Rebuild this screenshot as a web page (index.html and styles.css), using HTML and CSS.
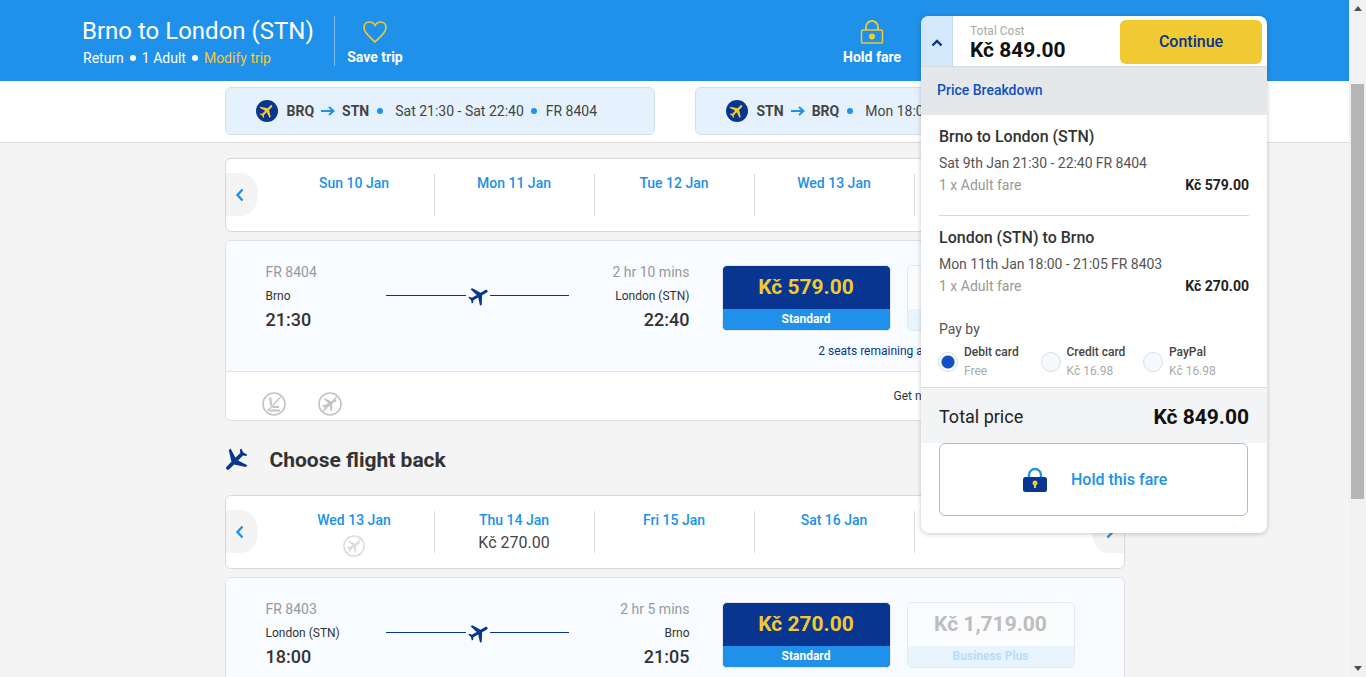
FILE: index.html
```html
<!DOCTYPE html>
<html lang="en">
<head>
    <meta charset="UTF-8">
    <meta name="viewport" content="width=device-width, initial-scale=1.0">
    <title>Brno to London (STN)</title>
    <link rel="stylesheet" href="styles.css">
</head>
<body>
    <svg class="defs" width="0" height="0">
        <symbol id="plane" viewBox="0 0 24 24"><path d="M21 16v-2l-8-5V3.5c0-.83-.67-1.5-1.5-1.5S10 2.67 10 3.5V9l-8 5v2l8-2.5V19l-2 1.5V22l3.5-1 3.5 1v-1.5L13 19v-5.5l8 2.5z"/></symbol>
        <symbol id="no-flight" viewBox="0 0 24 24">
            <circle cx="12" cy="12" r="11" fill="#fff" stroke="currentColor" stroke-width="1.6"/>
            <path fill="currentColor" transform="rotate(60 12 12) translate(3 3) scale(.75)" d="M21 16v-2l-8-5V3.5c0-.83-.67-1.5-1.5-1.5S10 2.67 10 3.5V9l-8 5v2l8-2.5V19l-2 1.5V22l3.5-1 3.5 1v-1.5L13 19v-5.5l8 2.5z"/>
            <path d="M19 4.500 5 19.500" stroke="currentColor" stroke-width="1.200"/>
        </symbol>
        <symbol id="no-seat" viewBox="0 0 24 24">
            <circle cx="12" cy="12" r="11" fill="#fff" stroke="currentColor" stroke-width="1.6"/>
            <path d="M8 5.500l1.500 9.500H17M7 18.500h11" fill="none" stroke="currentColor" stroke-width="2.200"/>
            <path d="M19 4.500 5 19.500" stroke="#fff" stroke-width="2.400"/>
            <path d="M19 4.500 5 19.500" stroke="currentColor" stroke-width="1.200"/>
        </symbol>
    </svg>

    <div class="page">
        <div class="content">
            <header class="top-bar">
                <div class="trip">
                    <h1>Brno to London (STN)</h1>
                    <div class="trip-sub">
                        <span>Return</span><i class="dot"></i><span>1 Adult</span><i class="dot"></i><span class="modify">Modify trip</span>
                    </div>
                </div>
                <div class="save-trip">
                    <svg class="heart" viewBox="0 0 26 24" width="26" height="24"><path d="M13 22C8 17 2 13 2 7.500 2 4 4.500 2 7.500 2 10 2 12 3.500 13 5.500 14 3.500 16 2 18.500 2 21.500 2 24 4 24 7.500 24 13 18 17 13 22z" fill="none" stroke="#f1c933" stroke-width="1.600"/></svg>
                    <span>Save trip</span>
                </div>
                <div class="hold-fare">
                    <svg viewBox="0 0 24 25" width="24" height="25"><path d="M6 11V8a6 6 0 0 1 12 0v3" fill="none" stroke="#f1c933" stroke-width="1.800"/><rect x="1.500" y="11" width="21" height="13" rx="1.500" fill="none" stroke="#f1c933" stroke-width="1.500"/><circle cx="12" cy="17.500" r="3" fill="#f1c933"/></svg>
                    <span>Hold fare</span>
                </div>
            </header>

            <div class="journeys">
                <div class="journey">
                    <span class="journey-icon"><svg width="18" height="18"><use href="#plane"/></svg></span>
                    <b>BRQ</b>
                    <svg class="arrow" viewBox="0 0 14 10" width="14" height="10"><path d="M0 5h12M8 1l4.500 4L8 9" fill="none" stroke="#2091eb" stroke-width="2"/></svg>
                    <b>STN</b>
                    <i class="dot blue"></i>
                    <span>Sat 21:30 - Sat 22:40</span>
                    <i class="dot blue"></i>
                    <span>FR 8404</span>
                </div>
                <div class="journey">
                    <span class="journey-icon"><svg width="18" height="18"><use href="#plane"/></svg></span>
                    <b>STN</b>
                    <svg class="arrow" viewBox="0 0 14 10" width="14" height="10"><path d="M0 5h12M8 1l4.500 4L8 9" fill="none" stroke="#2091eb" stroke-width="2"/></svg>
                    <b>BRQ</b>
                    <i class="dot blue"></i>
                    <span>Mon 18:00 - Mon 21:05</span>
                    <i class="dot blue"></i>
                    <span>FR 8403</span>
                </div>
            </div>

            <main class="main">
                <div class="dates">
                    <button class="nav prev"><svg viewBox="0 0 10 14" width="10" height="14"><path d="M7.500 1.500 2.500 7l5 5.500" fill="none" stroke="#2091eb" stroke-width="2.400"/></svg></button>
                    <div class="date"><span class="day">Sun 10 Jan</span></div>
                    <div class="date"><span class="day">Mon 11 Jan</span></div>
                    <div class="date"><span class="day">Tue 12 Jan</span></div>
                    <div class="date"><span class="day">Wed 13 Jan</span></div>
                    <div class="date"><span class="day">Thu 14 Jan</span></div>
                    <button class="nav next"><svg viewBox="0 0 10 14" width="10" height="14"><path d="M2.500 1.500 7.500 7l-5 5.500" fill="none" stroke="#2091eb" stroke-width="2.400"/></svg></button>
                </div>

                <section class="flight">
                    <div class="flight-top">
                        <div class="flight-info">
                            <div class="side">
                                <div class="code">FR 8404</div>
                                <div class="place">Brno</div>
                                <div class="time">21:30</div>
                            </div>
                            <div class="track"><span class="track-gap"><svg class="track-plane" width="24" height="24"><use href="#plane"/></svg></span></div>
                            <div class="side right">
                                <div class="code">2 hr 10 mins</div>
                                <div class="place">London (STN)</div>
                                <div class="time">22:40</div>
                            </div>
                        </div>
                        <div class="fares">
                            <div class="fare-row">
                                <div class="fare">
                                    <div class="fare-price">Kč 579.00</div>
                                    <div class="fare-name">Standard</div>
                                </div>
                                <div class="fare off">
                                    <div class="fare-price">Kč 1,719.00</div>
                                    <div class="fare-name">Business Plus</div>
                                </div>
                            </div>
                            <div class="seats">2 seats remaining at this price</div>
                        </div>
                    </div>
                    <div class="flight-bottom">
                        <svg class="perk" width="24" height="24"><use href="#no-seat"/></svg>
                        <svg class="perk" width="24" height="24"><use href="#no-flight"/></svg>
                        <span class="notify">Get notified</span>
                    </div>
                </section>

                <div class="back-title">
                    <svg class="back-plane" width="30" height="30"><use href="#plane"/></svg>
                    <h2>Choose flight back</h2>
                </div>

                <div class="dates">
                    <button class="nav prev"><svg viewBox="0 0 10 14" width="10" height="14"><path d="M7.500 1.500 2.500 7l5 5.500" fill="none" stroke="#2091eb" stroke-width="2.400"/></svg></button>
                    <div class="date"><span class="day">Wed 13 Jan</span><svg class="no-fly" width="22" height="22"><use href="#no-flight"/></svg></div>
                    <div class="date"><span class="day">Thu 14 Jan</span><span class="date-price">Kč 270.00</span></div>
                    <div class="date"><span class="day">Fri 15 Jan</span></div>
                    <div class="date"><span class="day">Sat 16 Jan</span></div>
                    <div class="date"><span class="day">Sun 17 Jan</span></div>
                    <button class="nav next"><svg viewBox="0 0 10 14" width="10" height="14"><path d="M2.500 1.500 7.500 7l-5 5.500" fill="none" stroke="#2091eb" stroke-width="2.400"/></svg></button>
                </div>

                <section class="flight">
                    <div class="flight-top">
                        <div class="flight-info">
                            <div class="side">
                                <div class="code">FR 8403</div>
                                <div class="place">London (STN)</div>
                                <div class="time">18:00</div>
                            </div>
                            <div class="track"><span class="track-gap"><svg class="track-plane" width="24" height="24"><use href="#plane"/></svg></span></div>
                            <div class="side right">
                                <div class="code">2 hr 5 mins</div>
                                <div class="place">Brno</div>
                                <div class="time">21:05</div>
                            </div>
                        </div>
                        <div class="fares">
                            <div class="fare-row">
                                <div class="fare">
                                    <div class="fare-price">Kč 270.00</div>
                                    <div class="fare-name">Standard</div>
                                </div>
                                <div class="fare off">
                                    <div class="fare-price">Kč 1,719.00</div>
                                    <div class="fare-name">Business Plus</div>
                                </div>
                            </div>
                        </div>
                    </div>
                </section>
            </main>
        </div>

        <div class="scrollbar">
            <i class="scroll-up"></i>
            <div class="scroll-track"><div class="scroll-thumb"></div></div>
            <i class="scroll-down"></i>
        </div>

        <aside class="cost">
            <div class="cost-bar">
                <div class="cost-toggle"><svg viewBox="0 0 12 8" width="12" height="8"><path d="M1.500 6.500 6 2l4.500 4.500" fill="none" stroke="#073590" stroke-width="2.400"/></svg></div>
                <div class="cost-total">
                    <span class="cost-label">Total Cost</span>
                    <span class="cost-value">Kč 849.00</span>
                </div>
                <button class="continue">Continue</button>
            </div>
            <div class="breakdown">
                <div class="breakdown-title">Price Breakdown</div>
                <div class="leg first">
                    <h3>Brno to London (STN)</h3>
                    <p class="leg-date">Sat 9th Jan 21:30 - 22:40 FR 8404</p>
                    <div class="leg-fare"><span>1 x Adult fare</span><b>Kč 579.00</b></div>
                </div>
                <div class="leg">
                    <h3>London (STN) to Brno</h3>
                    <p class="leg-date">Mon 11th Jan 18:00 - 21:05 FR 8403</p>
                    <div class="leg-fare"><span>1 x Adult fare</span><b>Kč 270.00</b></div>
                </div>
                <div class="pay">
                    <div class="pay-label">Pay by</div>
                    <div class="pay-options">
                        <div class="pay-option">
                            <i class="radio checked"></i>
                            <div><b>Debit card</b><span>Free</span></div>
                        </div>
                        <div class="pay-option">
                            <i class="radio"></i>
                            <div><b>Credit card</b><span>Kč 16.98</span></div>
                        </div>
                        <div class="pay-option">
                            <i class="radio"></i>
                            <div><b>PayPal</b><span>Kč 16.98</span></div>
                        </div>
                    </div>
                </div>
                <div class="total">
                    <span>Total price</span>
                    <b>Kč 849.00</b>
                </div>
                <button class="hold-btn">
                    <svg viewBox="0 0 24 25" width="24" height="25"><path d="M6 12V8a6 6 0 0 1 12 0v4" fill="none" stroke="#2091eb" stroke-width="2.400"/><rect y="10" width="24" height="15" rx="2.500" fill="#073590"/><circle cx="12" cy="16" r="2.500" fill="#f1c933"/><rect x="11" y="16" width="2" height="5" fill="#f1c933"/></svg>
                    <span>Hold this fare</span>
                </button>
            </div>
        </aside>
    </div>
</body>
</html>
```

FILE: styles.css
```css
* {
    margin: 0;
    padding: 0;
    box-sizing: border-box;
    font-family: Roboto, 'Liberation Sans', sans-serif;
}

body {
    height: 100vh;
    overflow: hidden;
    background: #f4f4f4;
    color: #333;
}

.defs {
    position: absolute;
}

button {
    border: none;
    background: none;
}

.page {
    display: flex;
    height: 100vh;
    position: relative;
}

.content {
    flex: 1;
    min-width: 0;
    overflow: hidden;
}

/* header */
.top-bar {
    display: flex;
    align-items: center;
    height: 81px;
    padding: 0 448px 0 82px;
    background: #2091eb;
    color: #fff;
}

.trip {
    width: 253px;
    height: 50px;
    border-right: 1px solid #7fbef2;
}

.trip h1 {
    font-size: 24px;
    font-weight: 400;
    line-height: 30px;
}

.trip-sub {
    display: flex;
    align-items: center;
    margin-top: 3px;
    padding-left: 1px;
    font-size: 14px;
    line-height: 18px;
}

.dot {
    display: inline-block;
    width: 6px;
    height: 6px;
    margin: 0 6px;
    border-radius: 50%;
    background: #fff;
}

.dot.blue {
    background: #2091eb;
    margin: 0 12px 0 8px;
}

.dot.blue + span + .dot.blue {
    margin: 0 9px 0 7px;
}

.modify {
    color: #f1c933;
}

.save-trip, .hold-fare {
    display: flex;
    flex-direction: column;
    align-items: center;
    font-size: 14px;
    font-weight: 700;
    line-height: 18px;
}

.save-trip {
    width: 58px;
    margin-left: 11px;
    padding-top: 5px;
    gap: 4px;
}

.hold-fare {
    margin-left: auto;
    gap: 4px;
    padding-top: 4px;
}

/* selected journeys */
.journeys {
    display: flex;
    justify-content: center;
    gap: 40px;
    height: 62px;
    padding-top: 6px;
    background: #fff;
    border-bottom: 1px solid #dcdcdc;
}

.journey {
    display: flex;
    align-items: center;
    width: 430px;
    height: 48px;
    padding-left: 30px;
    font-size: 14px;
    color: #444;
    background: #e5f2fd;
    border: 1px solid #d5dee6;
    border-radius: 6px;
    white-space: nowrap;
    overflow: hidden;
}

.journey b {
    font-weight: 700;
}

.journey-icon {
    display: flex;
    align-items: center;
    justify-content: center;
    width: 22px;
    height: 22px;
    margin-right: 9px;
    border-radius: 50%;
    background: #073590;
    fill: #f1c933;
}

.journey-icon svg {
    transform: rotate(45deg);
}

.arrow {
    margin: 0 7px;
}

/* main column */
.main {
    width: 900px;
    margin: 0 auto;
    padding-top: 15px;
}

.dates {
    display: flex;
    align-items: center;
    height: 74px;
    background: #fff;
    border: 1px solid #d9d9d9;
    border-radius: 6px;
}

.nav {
    display: flex;
    align-items: center;
    justify-content: center;
    width: 32px;
    height: 43px;
    margin-bottom: 1px;
    background: #f4f4f4;
}

.prev {
    margin-right: 17px;
    padding-right: 4px;
    border-radius: 0 50% 50% 0;
}

.next {
    margin-left: auto;
    padding-left: 4px;
    border-radius: 50% 0 0 50%;
}

.date {
    display: flex;
    flex-direction: column;
    align-items: center;
    width: 160px;
    height: 42px;
    border-right: 1px solid #ddd;
}

.date:nth-last-child(2) {
    border-right: none;
}

.day {
    font-size: 14px;
    font-weight: 500;
    line-height: 18px;
    color: #2091eb;
}

.date-price {
    margin-top: 4px;
    font-size: 16px;
    line-height: 20px;
    color: #444;
}

.no-fly {
    flex: none;
    margin-top: 6px;
    color: #dcdcdc;
    fill: #dcdcdc;
}

.flight {
    margin-top: 8px;
    height: 181px;
    background: #fff;
    border: 1px solid #dcdfe3;
    border-radius: 6px;
    overflow: hidden;
}

.flight-top {
    display: flex;
    height: 131px;
    padding: 24px 0 0 40px;
    background: #f8fbff;
    border-bottom: 1px solid #dfe3e8;
}

.flight-info {
    display: flex;
    width: 424px;
}

.side {
    width: 120px;
}

.side.right {
    width: 121px;
    text-align: right;
}

.code {
    font-size: 14px;
    line-height: 14px;
    color: #999;
}

.place {
    margin-top: 10px;
    font-size: 12px;
    line-height: 14px;
    color: #333;
}

.time {
    margin-top: 6px;
    font-size: 18px;
    font-weight: 500;
    line-height: 22px;
    color: #333;
}

.track {
    display: flex;
    justify-content: center;
    align-items: center;
    width: 183px;
    height: 21px;
    margin-top: 20px;
    background: linear-gradient(#073590, #073590) center / 100% 1px no-repeat;
}

.track-gap {
    display: block;
    width: 24px;
    height: 21px;
    margin-left: 1px;
    background: #f8fbff;
}

.track-plane {
    display: block;
    margin: -1px 0 0 1px;
    fill: #073590;
    transform: rotate(60deg);
}

.fares {
    flex: none;
    margin-left: 32px;
    width: 354px;
}

.fare-row {
    display: flex;
    gap: 16px;
}

.fare {
    width: 169px;
    height: 66px;
    border: 1px solid #e3e8ee;
    border-radius: 5px;
    background: #073590;
    overflow: hidden;
    text-align: center;
}

.fare-price {
    height: 43px;
    font-size: 21px;
    font-weight: 700;
    line-height: 43px;
    color: #f1c933;
}

.fare-name {
    height: 22px;
    font-size: 12px;
    font-weight: 700;
    line-height: 21px;
    color: #fff;
    background: #2091eb;
}

.fare.off {
    width: 168px;
    background: #fafcfe;
}

.fare.off .fare-price {
    color: #bdbdbd;
}

.fare.off .fare-name {
    color: #b5dcfb;
    background: #e9f5fe;
}

.seats {
    margin-top: 13px;
    font-size: 12px;
    line-height: 14px;
    text-align: center;
    color: #073590;
}

.flight-bottom {
    display: flex;
    align-items: flex-start;
    padding: 17px 0 0 36px;
}

.perk {
    margin: 3px 32px 0 0;
    color: #c3c3c3;
    fill: #c3c3c3;
}

.notify {
    margin-left: 520px;
    font-size: 12px;
    line-height: 14px;
    color: #333;
}

.back-title {
    display: flex;
    align-items: center;
    height: 74px;
    padding-top: 3px;
}

.back-plane {
    margin-right: 20px;
    margin-left: -5px;
    fill: #073590;
    transform: rotate(225deg);
}

.back-title h2 {
    font-size: 21px;
    font-weight: 700;
    color: #333;
}

/* scrollbar */
.scrollbar {
    display: flex;
    flex-direction: column;
    align-items: center;
    width: 17px;
    background: #f1f1f1;
}

.scroll-up, .scroll-down {
    flex: none;
    width: 0;
    height: 0;
    margin: 6px 0;
    border-left: 4px solid transparent;
    border-right: 4px solid transparent;
}

.scroll-up {
    border-bottom: 5px solid #505050;
}

.scroll-down {
    border-top: 5px solid #505050;
}

.scroll-track {
    flex: 1;
    width: 100%;
    padding: 67px 2px 0;
}

.scroll-thumb {
    height: 415px;
    background: #b5b5b5;
}

/* price panel */
.cost {
    position: absolute;
    top: 16px;
    left: 921px;
    width: 346px;
    border-radius: 8px;
    background: #fff;
    box-shadow: 0 1px 5px rgba(0, 0, 0, 0.22);
}

.cost-bar {
    display: flex;
    align-items: center;
    height: 50px;
    padding-right: 5px;
}

.cost-toggle {
    display: flex;
    align-items: center;
    justify-content: center;
    width: 32px;
    height: 50px;
    padding-top: 4px;
    background: #d3e8fb;
    border-right: 1px solid #c5ddf2;
    border-radius: 8px 0 0 0;
}

.cost-total {
    display: flex;
    flex-direction: column;
    margin-left: 17px;
    padding-top: 4px;
}

.cost-label {
    font-size: 12px;
    line-height: 13px;
    color: #aaa;
}

.cost-value {
    font-size: 21px;
    font-weight: 700;
    line-height: 24px;
    color: #111;
}

.continue {
    width: 142px;
    height: 44px;
    margin: 2px 0 0 auto;
    padding-bottom: 2px;
    font-size: 16px;
    font-weight: 500;
    color: #073590;
    background: #f1c933;
    border-radius: 6px;
}

.breakdown {
    height: 467px;
    border-top: 1px solid #d5dade;
    border-radius: 0 0 6px 6px;
}

.breakdown-title {
    height: 48px;
    padding-left: 16px;
    font-size: 14px;
    font-weight: 500;
    line-height: 47px;
    color: #1150c0;
    background: #e5e8eb;
}

.leg {
    margin: 0 18px;
    height: 100px;
    padding-top: 13px;
}

.leg.first {
    height: 101px;
    border-bottom: 1px solid #d9d9d9;
}

.leg h3 {
    font-size: 16px;
    font-weight: 500;
    line-height: 18px;
    color: #333;
}

.leg-date {
    margin-top: 8px;
    font-size: 14px;
    line-height: 18px;
    letter-spacing: -0.05px;
    color: #555;
}

.leg-fare {
    display: flex;
    justify-content: space-between;
    margin-top: 4px;
    font-size: 14px;
    line-height: 18px;
    color: #999;
}

.leg-fare b {
    font-weight: 700;
    color: #222;
}

.pay {
    height: 71px;
    padding: 4px 0 0 17px;
}

.pay-label {
    margin-left: 1px;
    font-size: 14px;
    line-height: 18px;
    color: #555;
}

.pay-options {
    display: flex;
    margin-top: 6px;
}

.pay-option {
    display: flex;
    align-items: center;
    gap: 6px;
    width: 102.5px;
}

.radio {
    flex: none;
    display: block;
    width: 20px;
    height: 20px;
    margin-top: 1px;
    border: 1px solid #d5e0ea;
    border-radius: 50%;
    background: #f6f9fd;
}

.radio.checked {
    background: radial-gradient(circle, #1150c0 0 6px, #fff 7px);
}

.pay-option b, .pay-option span {
    display: block;
}

.pay-option b {
    font-size: 12px;
    font-weight: 500;
    line-height: 16px;
    color: #444;
}

.pay-option span {
    margin-top: 4px;
    font-size: 12px;
    line-height: 14px;
    color: #aaa;
}

.total {
    display: flex;
    align-items: center;
    justify-content: space-between;
    height: 56px;
    padding: 2px 18px 0;
    background: #f3f4f6;
    border-top: 1px solid #d9dcdf;
    font-size: 18px;
    color: #222;
}

.total b {
    font-size: 21px;
    font-weight: 700;
    color: #111;
}

.hold-btn {
    display: flex;
    align-items: center;
    width: 309px;
    height: 73px;
    margin-left: 18px;
    padding-left: 83px;
    gap: 24px;
    background: #fff;
    border: 1px solid #8fc3f0;
    border-radius: 6px;
    font-size: 16px;
    font-weight: 500;
    color: #2091eb;
}
```
